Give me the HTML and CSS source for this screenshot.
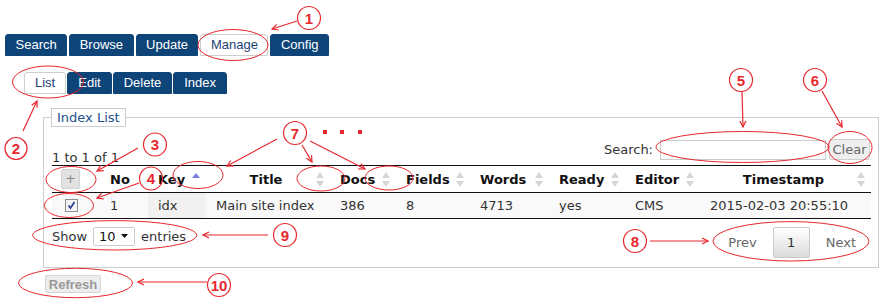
FILE: index.html
```html
<!DOCTYPE html>
<html lang="en">
<head>
  <meta charset="UTF-8" />
  <title>Index List</title>
  <link rel="stylesheet" href="styles.css">
</head>
<body>
  <div class="page">
    <nav class="tabs main-tabs">
      <span class="tab">Search</span>
      <span class="tab">Browse</span>
      <span class="tab">Update</span>
      <span class="tab active">Manage</span>
      <span class="tab">Config</span>
    </nav>
    <nav class="tabs sub-tabs">
      <span class="tab active">List</span>
      <span class="tab">Edit</span>
      <span class="tab">Delete</span>
      <span class="tab">Index</span>
    </nav>

    <fieldset class="panel">
      <legend>Index List</legend>
      <div class="toolbar">
        <div class="info">1 to 1 of 1</div>
        <div class="filter">
          <label for="q">Search:</label>
          <input type="text" id="q" />
          <button class="btn-clear">Clear</button>
        </div>
      </div>

      <table class="grid">
        <colgroup>
          <col style="width:48px"><col style="width:48px"><col style="width:58px"><col style="width:124px"><col style="width:66px">
          <col style="width:74px"><col style="width:79px"><col style="width:76px"><col style="width:75px"><col style="width:171px">
        </colgroup>
        <thead>
          <tr>
            <th><div class="th"><span class="btn-add">+</span></div></th>
            <th><div class="th"><span class="lbl">No</span></div></th>
            <th><div class="th"><span class="lbl">Key</span><svg class="sort" width="8" height="15"><polygon points="0,6 4,1 8,6" fill="#7b7fdb"/></svg></div></th>
            <th><div class="th center"><span class="lbl">Title</span><svg class="sort" width="8" height="15"><polygon points="0,6 4,0 8,6" fill="#d6d6d6"/><polygon points="0,9 8,9 4,15" fill="#d6d6d6"/></svg></div></th>
            <th><div class="th"><span class="lbl">Docs</span><svg class="sort" width="8" height="15"><polygon points="0,6 4,0 8,6" fill="#d6d6d6"/><polygon points="0,9 8,9 4,15" fill="#d6d6d6"/></svg></div></th>
            <th><div class="th"><span class="lbl">Fields</span><svg class="sort" width="8" height="15"><polygon points="0,6 4,0 8,6" fill="#d6d6d6"/><polygon points="0,9 8,9 4,15" fill="#d6d6d6"/></svg></div></th>
            <th><div class="th"><span class="lbl">Words</span><svg class="sort" width="8" height="15"><polygon points="0,6 4,0 8,6" fill="#d6d6d6"/><polygon points="0,9 8,9 4,15" fill="#d6d6d6"/></svg></div></th>
            <th><div class="th"><span class="lbl">Ready</span><svg class="sort" width="8" height="15"><polygon points="0,6 4,0 8,6" fill="#d6d6d6"/><polygon points="0,9 8,9 4,15" fill="#d6d6d6"/></svg></div></th>
            <th><div class="th"><span class="lbl">Editor</span><svg class="sort" width="8" height="15"><polygon points="0,6 4,0 8,6" fill="#d6d6d6"/><polygon points="0,9 8,9 4,15" fill="#d6d6d6"/></svg></div></th>
            <th><div class="th center"><span class="lbl">Timestamp</span><svg class="sort" width="8" height="15"><polygon points="0,6 4,0 8,6" fill="#d6d6d6"/><polygon points="0,9 8,9 4,15" fill="#d6d6d6"/></svg></div></th>
          </tr>
        </thead>
        <tbody>
          <tr>
            <td class="cb">
              <svg width="13" height="13"><rect x="0.5" y="0.5" width="12" height="12" fill="#f3f3f3" stroke="#8e8f8f"/><path d="M3.5 6.5 L5.5 9 L9.5 3" fill="none" stroke="#2b3f93" stroke-width="1.8"/></svg>
            </td>
            <td>1</td>
            <td class="sorted">idx</td>
            <td>Main site index</td>
            <td>386</td>
            <td>8</td>
            <td>4713</td>
            <td>yes</td>
            <td>CMS</td>
            <td>2015-02-03 20:55:10</td>
          </tr>
        </tbody>
      </table>

      <div class="footer">
        <div class="length">
          Show
          <span class="select">10<svg width="7" height="4"><polygon points="0,0 7,0 3.5,4" fill="#111"/></svg></span>
          entries
        </div>
        <div class="paging">
          <span class="pg">Prev</span>
          <span class="pg current">1</span>
          <span class="pg">Next</span>
        </div>
      </div>
    </fieldset>

    <button class="btn-refresh">Refresh</button>

    <!-- callouts drawn over the screen -->
    <svg class="notes" width="891" height="304">
      <defs>
        <marker id="head" markerWidth="8" markerHeight="8" refX="7" refY="4" orient="auto" markerUnits="userSpaceOnUse">
          <path d="M1,1 L7,4 L1,7" fill="none" stroke="#e8282e" stroke-width="1.2"/>
        </marker>
      </defs>
      <g fill="none" stroke="#e8282e" stroke-width="1">
        <ellipse cx="233" cy="45" rx="35" ry="15.5"/>
        <ellipse cx="48" cy="82" rx="35.5" ry="16"/>
        <ellipse cx="71" cy="179.5" rx="25" ry="13"/>
        <ellipse cx="69" cy="205.5" rx="24.5" ry="12"/>
        <ellipse cx="198" cy="175" rx="25" ry="13.5"/>
        <ellipse cx="321" cy="178.5" rx="24" ry="12.5"/>
        <ellipse cx="389" cy="178" rx="24" ry="12"/>
        <ellipse cx="742.5" cy="147" rx="86.5" ry="15.5"/>
        <ellipse cx="850" cy="147.5" rx="22" ry="16"/>
        <ellipse cx="791" cy="241.3" rx="78" ry="19.7"/>
        <ellipse cx="114.7" cy="235.3" rx="82" ry="14.7"/>
        <ellipse cx="75.5" cy="283" rx="57" ry="14.7"/>
      </g>
      <g fill="none" stroke="#e8282e" stroke-width="1.2" marker-end="url(#head)">
        <line x1="297" y1="21" x2="272" y2="29"/>
        <line x1="23" y1="131" x2="37" y2="101"/>
        <line x1="138" y1="148" x2="97" y2="171"/>
        <line x1="139" y1="183" x2="97" y2="198"/>
        <line x1="277" y1="139" x2="227" y2="166"/>
        <line x1="302" y1="145" x2="312" y2="162"/>
        <line x1="310" y1="141" x2="365" y2="169"/>
        <line x1="742" y1="92" x2="743" y2="127"/>
        <line x1="822" y1="91" x2="842" y2="127"/>
        <line x1="650" y1="241" x2="708" y2="241"/>
        <line x1="268" y1="235" x2="203" y2="235"/>
        <line x1="207" y1="282" x2="138" y2="282"/>
      </g>
      <g fill="#e8282e">
        <rect x="323" y="130" width="4" height="4"/>
        <rect x="340" y="130" width="4" height="4"/>
        <rect x="358" y="130" width="4" height="4"/>
      </g>
      <g class="num">
        <circle cx="309" cy="18" r="11.5"/><text x="309" y="18">1</text>
        <circle cx="16" cy="148.5" r="11"/><text x="16" y="148.5">2</text>
        <circle cx="155" cy="144.5" r="11.5"/><text x="155" y="144.5">3</text>
        <circle cx="151" cy="178.5" r="11.5"/><text x="151" y="178.5">4</text>
        <circle cx="741" cy="80" r="11.5"/><text x="741" y="80">5</text>
        <circle cx="815" cy="80" r="11.5"/><text x="815" y="80">6</text>
        <circle cx="295" cy="133" r="11.5"/><text x="295" y="133">7</text>
        <circle cx="635" cy="241" r="11.5"/><text x="635" y="241">8</text>
        <circle cx="285" cy="235" r="11.5"/><text x="285" y="235">9</text>
        <circle cx="219" cy="285" r="11.5"/><text x="219" y="285">10</text>
      </g>
    </svg>
  </div>
</body>
</html>
```

FILE: styles.css
```css
* {
  box-sizing: border-box;
}

body {
  margin: 0;
  background: #fff;
  font-family: "DejaVu Sans", Verdana, sans-serif;
  font-size: 13px;
  color: #333;
}

.page {
  position: relative;
  width: 891px;
  height: 304px;
  padding-top: 34px;
  overflow: hidden;
}

/* Tabs */
.tabs {
  display: flex;
}

.main-tabs {
  gap: 2px;
  margin-left: 5px;
}

.sub-tabs {
  gap: 1px;
  margin: 16px 0 0 24px;
}

.tab {
  height: 22px;
  line-height: 20px;
  padding: 0 9.5px;
  font-family: "Liberation Sans", Arial, sans-serif;
  font-size: 13px;
  color: #fff;
  background: #0e4478;
  border: 1px solid #0e4478;
  border-radius: 3px 3px 0 0;
}

.sub-tabs .tab {
  padding: 0 10px;
}

.tab.active {
  background: #fff;
  color: #1d3f75;
  border-color: #cfcfcf;
}

/* Panel */
.panel {
  width: 836px;
  margin: 14px 0 0 43px;
  padding: 0 7px 9px 8px;
  border: 1px solid #cccccc;
}

.panel legend {
  margin-left: -1px;
  padding: 0 5px;
  line-height: 17px;
  border: 1px solid #cccccc;
  color: #23508c;
}

.toolbar {
  display: flex;
  justify-content: space-between;
  height: 26px;
  margin-top: 12px;
}

.info {
  align-self: flex-end;
  line-height: 15px;
}

.filter {
  display: flex;
  align-items: center;
  height: 21px;
  padding-right: 1px;
}

.filter input {
  width: 166px;
  height: 20px;
  margin-left: 7px;
  border: 1px solid #cccccc;
}

.btn-clear {
  width: 41px;
  height: 21px;
  margin-left: 3px;
  padding: 0;
  font-family: "DejaVu Sans", Verdana, sans-serif;
  font-size: 13px;
  color: #666;
  background: #efefef;
  border: 1px solid #d0d0d0;
  border-radius: 2px;
}

/* Table */
.grid {
  width: 819px;
  table-layout: fixed;
  border-collapse: separate;
  border-spacing: 0;
}

.grid th {
  padding: 0;
  border-top: 1px solid #111;
  border-bottom: 1px solid #111;
  font-weight: bold;
  color: #111;
}

.th {
  display: flex;
  align-items: center;
  height: 26px;
  padding: 0 6px 0 10px;
}

.th .lbl {
  flex: 1;
  text-align: left;
  white-space: nowrap;
}

.th.center .lbl {
  text-align: center;
}

.sort {
  flex: none;
}

.btn-add {
  width: 19px;
  height: 20px;
  margin-left: -1px;
  line-height: 18px;
  text-align: center;
  font-weight: normal;
  color: #888;
  background: #e2e2e2;
  border: 1px solid #d2d2d2;
  border-radius: 2px;
}

.grid td {
  height: 26px;
  padding: 0 10px;
  line-height: 25px;
  white-space: nowrap;
  background: #f9f9f9;
  border-bottom: 1px solid #111;
}

.grid td.sorted {
  background: #f1f1f1;
}

.grid td.cb {
  padding-left: 13px;
}

.grid td.cb svg {
  display: block;
}

/* Footer */
.footer {
  display: flex;
  justify-content: space-between;
  align-items: flex-start;
  padding-top: 7px;
}

.length {
  display: flex;
  align-items: center;
  gap: 6px;
  height: 20px;
}

.select {
  display: flex;
  align-items: center;
  justify-content: space-between;
  width: 42px;
  height: 19px;
  padding: 0 6px 0 5px;
  color: #111;
  border: 1px solid #cdcdcd;
  border-radius: 2px;
}

.paging {
  display: flex;
  gap: 2px;
  margin-top: 1px;
  padding-right: 1px;
}

.pg {
  height: 31px;
  padding: 7px 13px;
  line-height: 15px;
  color: #666;
  border: 1px solid transparent;
  border-radius: 2px;
}

.pg.current {
  width: 37px;
  padding: 7px 0;
  text-align: center;
  color: #333;
  border-color: #cacaca;
  background: linear-gradient(#fff, #dcdcdc);
}

.btn-refresh {
  display: block;
  width: 56px;
  height: 18px;
  margin: 7px 0 0 45px;
  padding: 0;
  font-family: "Liberation Sans", Arial, sans-serif;
  font-size: 13px;
  font-weight: bold;
  color: #9a9a9a;
  background: #ededed;
  border: 1px solid #d6d6d6;
  border-radius: 2px;
}

/* Callouts */
.notes {
  position: absolute;
  top: 0;
  left: 0;
  pointer-events: none;
}

.num circle {
  fill: none;
  stroke: #e8282e;
  stroke-width: 1.2;
}

.num text {
  font-family: "Liberation Sans", Arial, sans-serif;
  font-size: 15px;
  font-weight: bold;
  fill: #e8282e;
  text-anchor: middle;
  dominant-baseline: central;
}
```
